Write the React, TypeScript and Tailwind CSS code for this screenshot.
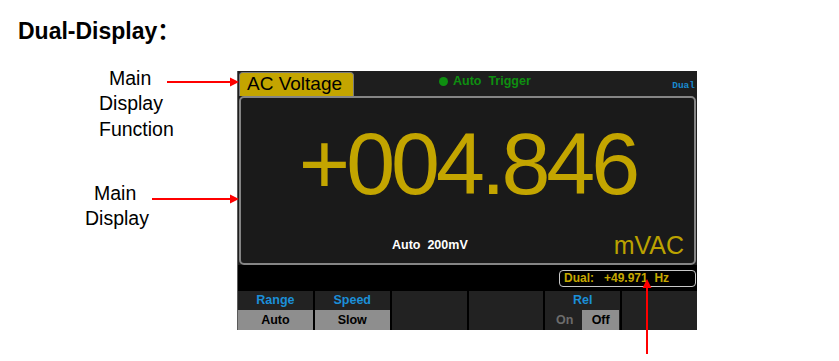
const keys = [
  { label: 'Range', value: 'Auto' },
  { label: 'Speed', value: 'Slow' },
  {},
  {},
  { label: 'Rel', rel: true },
  {},
] as { label?: string; value?: string; rel?: boolean }[];

function SoftKey({ label, value, rel }: { label?: string; value?: string; rel?: boolean }) {
  return (
    <div className="flex flex-col bg-[#222222]">
      <div className="h-[19px] text-center text-[12.5px] leading-[19px] font-bold text-[#1b8fd8]">
        {label}
      </div>
      {value && (
        <div className="h-[20px] bg-[#8e8e8e] text-center text-[12.5px] leading-[20px] font-bold text-black">
          {value}
        </div>
      )}
      {rel && (
        <div className="flex h-[20px] text-[12.5px] leading-[20px] font-bold">
          <div className="flex-1 text-center text-[#6c6c6c] pl-[2px]">On</div>
          <div className="w-[37px] mr-[1px] bg-[#8e8e8e] text-center text-black">Off</div>
        </div>
      )}
    </div>
  );
}

function Screen() {
  return (
    <div className="mt-[9px] w-[460px] h-[259px] bg-[#1e1e1e] border-l border-[#5a5a5a] flex flex-col">
      {/* top bar */}
      <div className="flex h-[25px]">
        <div className="mt-[1px] ml-[1px] h-[24px] w-[115px] rounded-t-[4px] bg-[#c4a500] border border-b-0 border-[#7a7a7a] pl-[7px] text-[19px] leading-[22px] text-black">
          AC Voltage
        </div>
        <div className="ml-[85px] mt-[3px] h-[15px] flex items-center">
          <span className="w-[9px] h-[9px] rounded-full bg-[#0e8e10]" />
          <span className="ml-[5px] text-[12.5px] leading-[15px] font-bold text-[#0e8e10] whitespace-pre">
            Auto  Trigger
          </span>
        </div>
        <div className="ml-auto mr-[2px] self-end mb-[5px] font-['Liberation_Mono',monospace] font-bold text-[9.5px] leading-[10px] text-[#1a8ad0]">
          Dual
        </div>
      </div>

      {/* main display */}
      <div className="mx-[1px] h-[169px] rounded-[5px] border-2 border-[#858585] bg-[#1a1a1a] flex flex-col">
        <div className="pt-[21.5px] flex justify-center">
          <span className="text-[88px] leading-[88px] tracking-[-4px] text-[#c3a500]">+004.846</span>
        </div>
        <div className="mt-[23px] flex items-start">
          <span className="ml-[151px] mt-[7px] text-[12.5px] leading-[15px] font-bold text-white whitespace-pre">
            Auto  200mV
          </span>
          <span className="ml-auto mr-[10px] text-[25px] leading-[28px] text-[#bba200]">mVAC</span>
        </div>
      </div>

      {/* dual strip */}
      <div className="h-[26px] bg-black flex items-start justify-end">
        <div className="mt-[5px] mr-[1px] w-[137px] h-[17px] rounded-[4px] border-[1.5px] border-[#c8c8c8] pl-[4px] text-[12px] leading-[14px] font-bold text-[#c6a800] whitespace-pre">
          Dual:   +49.971  Hz
        </div>
      </div>

      {/* softkeys */}
      <div className="grid grid-cols-6 gap-x-[2px] bg-black h-[39px]">
        {keys.map((k, i) => (
          <SoftKey key={i} {...k} />
        ))}
      </div>
    </div>
  );
}

export default function App() {
  return (
    <div className="relative w-[839px] h-[361px] bg-white overflow-hidden font-['Liberation_Sans',Arial,sans-serif]">
      <h1 className="pl-[18px] pt-[15px] text-[23px] leading-[28px] font-bold text-black">
        Dual-Display<span className="font-['Noto_Sans_CJK_SC',sans-serif]">：</span>
      </h1>

      <div className="flex mt-[17px]">
        <div className="w-[237px] flex flex-col items-start text-[19.5px] leading-[25.5px] text-black">
          <span className="mt-[3.5px] ml-[109px]">Main</span>
          <span className="ml-[99px]">Display</span>
          <span className="ml-[99px]">Function</span>
          <span className="mt-[38.5px] ml-[94px]">Main</span>
          <span className="ml-[85px]">Display</span>
        </div>
        <Screen />
      </div>

      <svg className="absolute inset-0 pointer-events-none" width="839" height="361">
        <line x1="167" y1="82" x2="231" y2="82" stroke="#ff0000" strokeWidth="2" />
        <polygon points="239,82 230,77.5 230,86.5" fill="#ff0000" />
        <line x1="152" y1="199" x2="231" y2="199" stroke="#ff0000" strokeWidth="2" />
        <polygon points="239,199 230,194.5 230,203.5" fill="#ff0000" />
        <line x1="647" y1="354" x2="647" y2="287" stroke="#ff0000" strokeWidth="2" />
        <polygon points="647,279 642.5,288 651.5,288" fill="#ff0000" />
      </svg>
    </div>
  );
}
